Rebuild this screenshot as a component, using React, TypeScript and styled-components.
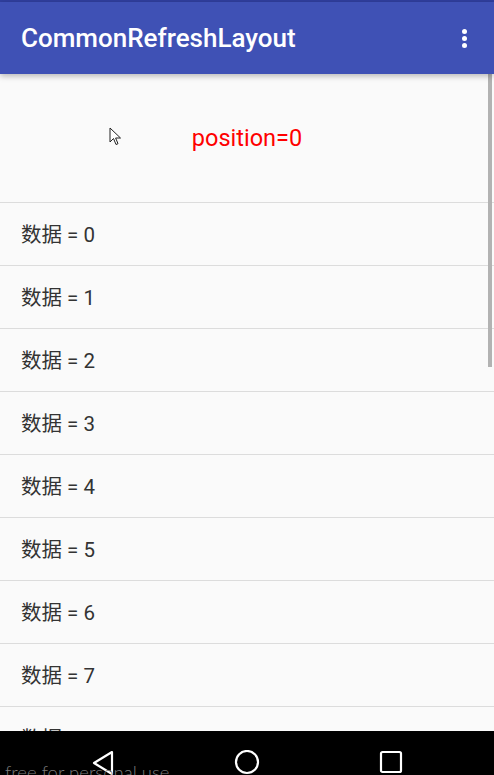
import React from 'react';
import styled, {createGlobalStyle} from 'styled-components';

const GlobalStyle = createGlobalStyle`
    *, *::before, *::after {
        box-sizing: border-box;
    }
    html, body {
        margin: 0;
        padding: 0;
        height: 100%;
        overflow: hidden;
        background: #fafafa;
    }
    #root {
        height: 100%;
    }
`;

const Screen = styled.div`
    position: relative;
    height: 775px;
    display: flex;
    flex-direction: column;
    overflow: hidden;
    font-family: Roboto, "Noto Sans CJK SC", sans-serif;
    background: #fafafa;
`;

const StatusStrip = styled.div`
    height: 2px;
    flex-shrink: 0;
    background: #303f9f;
`;

const AppBar = styled.header`
    position: relative;
    z-index: 2;
    height: 72px;
    flex-shrink: 0;
    display: flex;
    align-items: center;
    justify-content: space-between;
    padding: 0 27px 0 21px;
    background: #3f51b5;
    box-shadow: 0 2px 6px rgba(0, 0, 0, 0.28);
`;

const Title = styled.h1`
    margin: 0;
    color: #fff;
    font-size: 26px;
    font-weight: 500;
    letter-spacing: 0;
`;

const MenuButton = styled.button`
    display: flex;
    flex-direction: column;
    gap: 2px;
    padding: 0;
    border: none;
    background: none;
`;

const Dot = styled.span`
    width: 5px;
    height: 5px;
    border-radius: 50%;
    background: #fff;
`;

const List = styled.div`
    position: relative;
    flex: 1;
    min-height: 0;
    overflow: hidden;
`;

const HeaderItem = styled.div`
    height: 129px;
    display: flex;
    align-items: center;
    justify-content: center;
    border-bottom: 1px solid #dcdcdc;
    color: #ff0000;
    font-size: 23.5px;
`;

const Row = styled.div`
    height: 63px;
    display: flex;
    align-items: center;
    padding: 0 0 2px 21px;
    border-bottom: 1px solid #dcdcdc;
    color: #333;
    font-size: 20.5px;
`;

const ScrollThumb = styled.div`
    position: absolute;
    top: 0;
    right: 2px;
    width: 4px;
    height: 293px;
    background: #b2b2b2;
`;

const Cursor = styled.svg`
    position: absolute;
    left: 109px;
    top: 53px;
`;

const NavBar = styled.nav`
    height: 44px;
    flex-shrink: 0;
    display: flex;
    justify-content: center;
    align-items: flex-start;
    gap: 119px;
    padding-top: 19px;
    background: #000;
`;

const NavIcon = styled.svg`
    display: block;
`;

const Watermark = styled.div`
    position: absolute;
    left: 5px;
    top: 761px;
    color: #7a7a7a;
    font-family: Lato, sans-serif;
    font-weight: 300;
    font-size: 18.5px;
    line-height: 22px;
    white-space: nowrap;
    pointer-events: none;
`;

const rows = Array.from({length: 9}, (_, i) => i);

const App: React.FC = () => {
    return (
        <>
            <GlobalStyle/>
            <Screen>
                <StatusStrip/>
                <AppBar>
                    <Title>CommonRefreshLayout</Title>
                    <MenuButton aria-label="More">
                        <Dot/>
                        <Dot/>
                        <Dot/>
                    </MenuButton>
                </AppBar>

                <List>
                    <HeaderItem>position=0</HeaderItem>
                    {rows.map(i => (
                        <Row key={i}>数据 = {i}</Row>
                    ))}
                    <ScrollThumb/>
                    <Cursor width="13" height="19" viewBox="0 0 13 19">
                        <path d="M1 1 L1 15 L4.5 11.5 L7 17.5 L9 16.7 L6.6 11 L11.5 11 Z"
                              fill="#fff" stroke="#222" strokeWidth="1" strokeLinejoin="round"/>
                    </Cursor>
                </List>

                {/* Android navigation */}
                <NavBar>
                    <NavIcon width="24" height="26" viewBox="0 0 24 26">
                        <path d="M21 2 L3 13 L21 24 Z" fill="none" stroke="#fff" strokeWidth="2.2"
                              strokeLinejoin="round"/>
                    </NavIcon>
                    <NavIcon width="26" height="26" viewBox="0 0 26 26">
                        <circle cx="13" cy="12" r="11" fill="none" stroke="#fff" strokeWidth="2.2"/>
                    </NavIcon>
                    <NavIcon width="24" height="24" viewBox="0 0 24 24">
                        <rect x="2" y="2" width="20" height="20" rx="1.5" fill="none" stroke="#fff"
                              strokeWidth="2.2"/>
                    </NavIcon>
                </NavBar>
                <Watermark>free for personal use</Watermark>
            </Screen>
        </>
    );
};

export default App;
